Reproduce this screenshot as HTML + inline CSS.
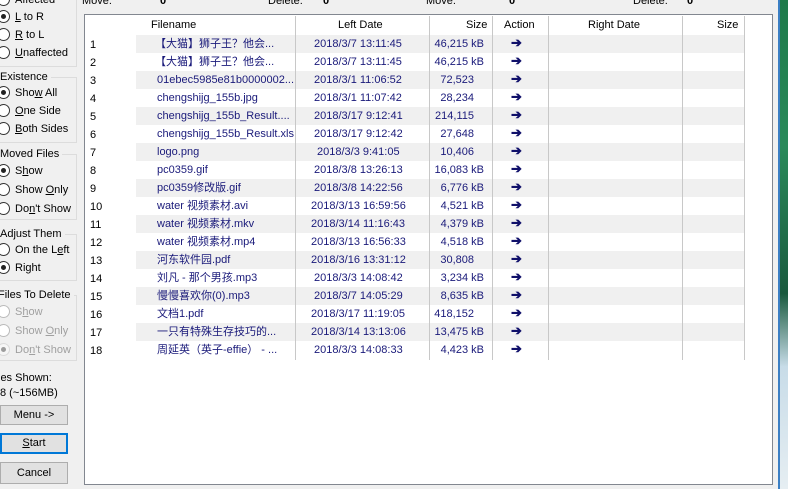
<!DOCTYPE html>
<html><head><meta charset="utf-8"><style>
*{margin:0;padding:0;box-sizing:border-box}
body{width:788px;height:489px;overflow:hidden;background:#f0f0f0;font-family:"Liberation Sans","Noto Sans CJK SC",sans-serif;font-size:11px;color:#000;position:relative}
.a{position:absolute;white-space:nowrap}
.rb{position:absolute;left:-3px;width:13px;height:13px;border:1px solid #333;border-radius:50%;background:#fff}
.rb.on::after{content:"";position:absolute;left:3px;top:3px;width:5px;height:5px;border-radius:50%;background:#222}
.rb.dis{border-color:#bbb}
.lb{position:absolute;left:15px;font-size:11px;line-height:14px}
.dis2{color:#a0a0a0}
.grp{position:absolute;left:-5px;width:82px;border:1px solid #dcdcdc;border-left:none}
.gt{position:absolute;left:0;background:#f0f0f0;padding-right:3px;line-height:14px}
.btn{position:absolute;left:0;width:68px;border:1px solid #adadad;background:#e1e1e1;text-align:center;font-size:11px}
#box{position:absolute;left:84px;top:14px;width:689px;height:471px;background:#fff;border:1px solid #828790}
.row{position:absolute;left:51px;width:609px;height:18px}
.c{position:absolute;top:2px;color:#1a1a7a;white-space:nowrap;font-size:11px;line-height:14px}
.n{position:absolute;left:5px;color:#000;font-size:11px;line-height:14px}
.vl{position:absolute;top:0;width:1px;height:344px;background:#c8c8c8}
.h{position:absolute;top:4px;font-size:11px;color:#000}
.ar{left:375px;top:1px;font-weight:bold;font-size:13px;color:#10106a}
</style></head><body>
<div class="a" style="left:82px;top:-5px">Move:</div>
<div class="a" style="left:160px;top:-5px;font-weight:bold">0</div>
<div class="a" style="left:268px;top:-5px">Delete:</div>
<div class="a" style="left:323px;top:-5px;font-weight:bold">0</div>
<div class="a" style="left:426px;top:-5px">Move:</div>
<div class="a" style="left:509px;top:-5px;font-weight:bold">0</div>
<div class="a" style="left:633px;top:-5px">Delete:</div>
<div class="a" style="left:687px;top:-5px;font-weight:bold">0</div>

<div class="grp" style="top:-10px;height:77px"></div>
<div class="rb" style="top:-7px"></div><div class="lb" style="top:-7px">Affected</div>
<div class="rb on" style="top:10px"></div><div class="lb" style="top:10px"><u>L</u> to R</div>
<div class="rb" style="top:28px"></div><div class="lb" style="top:28px"><u>R</u> to L</div>
<div class="rb" style="top:46px"></div><div class="lb" style="top:46px"><u>U</u>naffected</div>

<div class="grp" style="top:77px;height:66px"></div>
<div class="gt" style="top:70px">Existence</div>
<div class="rb on" style="top:86px"></div><div class="lb" style="top:86px">Sho<u>w</u> All</div>
<div class="rb" style="top:104px"></div><div class="lb" style="top:104px"><u>O</u>ne Side</div>
<div class="rb" style="top:122px"></div><div class="lb" style="top:122px"><u>B</u>oth Sides</div>

<div class="grp" style="top:154px;height:66px"></div>
<div class="gt" style="top:147px">Moved Files</div>
<div class="rb on" style="top:164px"></div><div class="lb" style="top:164px">S<u>h</u>ow</div>
<div class="rb" style="top:183px"></div><div class="lb" style="top:183px">Show <u>O</u>nly</div>
<div class="rb" style="top:202px"></div><div class="lb" style="top:202px">Do<u>n</u>'t Show</div>

<div class="grp" style="top:234px;height:47px"></div>
<div class="gt" style="top:227px">Adjust Them</div>
<div class="rb" style="top:243px"></div><div class="lb" style="top:243px">On the L<u>e</u>ft</div>
<div class="rb on" style="top:261px"></div><div class="lb" style="top:261px">Ri<u>g</u>ht</div>

<div class="grp" style="top:295px;height:66px"></div>
<div class="gt" style="top:288px;left:-2px">Files To Delete</div>
<div class="rb dis" style="top:305px"></div><div class="lb dis2" style="top:305px">S<u>h</u>ow</div>
<div class="rb dis" style="top:324px"></div><div class="lb dis2" style="top:324px">Show <u>O</u>nly</div>
<div class="rb dis on" style="top:343px;opacity:.4"></div><div class="lb dis2" style="top:343px">Do<u>n</u>'t Show</div>

<div class="a" style="left:-2px;top:372px">les Shown:</div>
<div class="a" style="left:0;top:387px">8 (~156MB)</div>
<div class="btn" style="top:405px;height:20px;line-height:18px">Menu -&gt;</div>
<div class="btn" style="top:433px;height:21px;line-height:17px;border:2px solid #0078d7"><u>S</u>tart</div>
<div class="btn" style="top:462px;height:22px;line-height:20px">Cancel</div>

<div class="a" style="left:778px;top:0;width:2px;height:489px;background:#3b7fc4"></div>
<div class="a" style="left:780px;top:0;width:8px;height:489px;background:linear-gradient(#1e7a4a,#2a8a5a 30%,#1a5a3e 60%,#c8dce8 75%,#e6eef2)"></div>

<div id="box">
<div class="h" style="left:66px">Filename</div>
<div class="h" style="left:253px">Left Date</div>
<div class="h" style="left:381px">Size</div>
<div class="h" style="left:419px">Action</div>
<div class="h" style="left:503px">Right Date</div>
<div class="h" style="left:632px">Size</div>
</div>

<div id="rows" style="position:absolute;left:85px;top:35px;width:687px">
<div class="n" style="top:3px">1</div><div class="row" style="top:0;background:#f0f0f0"><span class="c" style="left:19px">【大猫】狮子王？他会...</span><span class="c" style="left:178px">2018/3/7 13:11:45</span><span class="c" style="right:261px">46,215 kB</span><span class="c ar">➔</span></div>
<div class="n" style="top:21px">2</div><div class="row" style="top:18px"><span class="c" style="left:19px">【大猫】狮子王？他会...</span><span class="c" style="left:178px">2018/3/7 13:11:45</span><span class="c" style="right:261px">46,215 kB</span><span class="c ar">➔</span></div>
<div class="n" style="top:39px">3</div><div class="row" style="top:36px;background:#f0f0f0"><span class="c" style="left:21px">01ebec5985e81b0000002...</span><span class="c" style="left:178px">2018/3/1 11:06:52</span><span class="c" style="right:271px">72,523</span><span class="c ar">➔</span></div>
<div class="n" style="top:57px">4</div><div class="row" style="top:54px"><span class="c" style="left:21px">chengshijg_155b.jpg</span><span class="c" style="left:178px">2018/3/1 11:07:42</span><span class="c" style="right:271px">28,234</span><span class="c ar">➔</span></div>
<div class="n" style="top:75px">5</div><div class="row" style="top:72px;background:#f0f0f0"><span class="c" style="left:21px">chengshijg_155b_Result....</span><span class="c" style="left:178px">2018/3/17 9:12:41</span><span class="c" style="right:271px">214,115</span><span class="c ar">➔</span></div>
<div class="n" style="top:93px">6</div><div class="row" style="top:90px"><span class="c" style="left:21px">chengshijg_155b_Result.xls</span><span class="c" style="left:178px">2018/3/17 9:12:42</span><span class="c" style="right:271px">27,648</span><span class="c ar">➔</span></div>
<div class="n" style="top:111px">7</div><div class="row" style="top:108px;background:#f0f0f0"><span class="c" style="left:21px">logo.png</span><span class="c" style="left:181px">2018/3/3 9:41:05</span><span class="c" style="right:271px">10,406</span><span class="c ar">➔</span></div>
<div class="n" style="top:129px">8</div><div class="row" style="top:126px"><span class="c" style="left:21px">pc0359.gif</span><span class="c" style="left:178px">2018/3/8 13:26:13</span><span class="c" style="right:261px">16,083 kB</span><span class="c ar">➔</span></div>
<div class="n" style="top:147px">9</div><div class="row" style="top:144px;background:#f0f0f0"><span class="c" style="left:21px">pc0359修改版.gif</span><span class="c" style="left:178px">2018/3/8 14:22:56</span><span class="c" style="right:261px">6,776 kB</span><span class="c ar">➔</span></div>
<div class="n" style="top:165px">10</div><div class="row" style="top:162px"><span class="c" style="left:21px">water 视频素材.avi</span><span class="c" style="left:175px">2018/3/13 16:59:56</span><span class="c" style="right:261px">4,521 kB</span><span class="c ar">➔</span></div>
<div class="n" style="top:183px">11</div><div class="row" style="top:180px;background:#f0f0f0"><span class="c" style="left:21px">water 视频素材.mkv</span><span class="c" style="left:175px">2018/3/14 11:16:43</span><span class="c" style="right:261px">4,379 kB</span><span class="c ar">➔</span></div>
<div class="n" style="top:201px">12</div><div class="row" style="top:198px"><span class="c" style="left:21px">water 视频素材.mp4</span><span class="c" style="left:175px">2018/3/13 16:56:33</span><span class="c" style="right:261px">4,518 kB</span><span class="c ar">➔</span></div>
<div class="n" style="top:219px">13</div><div class="row" style="top:216px;background:#f0f0f0"><span class="c" style="left:21px">河东软件园.pdf</span><span class="c" style="left:175px">2018/3/16 13:31:12</span><span class="c" style="right:271px">30,808</span><span class="c ar">➔</span></div>
<div class="n" style="top:237px">14</div><div class="row" style="top:234px"><span class="c" style="left:21px">刘凡 - 那个男孩.mp3</span><span class="c" style="left:178px">2018/3/3 14:08:42</span><span class="c" style="right:261px">3,234 kB</span><span class="c ar">➔</span></div>
<div class="n" style="top:255px">15</div><div class="row" style="top:252px;background:#f0f0f0"><span class="c" style="left:21px">慢慢喜欢你(0).mp3</span><span class="c" style="left:178px">2018/3/7 14:05:29</span><span class="c" style="right:261px">8,635 kB</span><span class="c ar">➔</span></div>
<div class="n" style="top:273px">16</div><div class="row" style="top:270px"><span class="c" style="left:21px">文档1.pdf</span><span class="c" style="left:175px">2018/3/17 11:19:05</span><span class="c" style="right:271px">418,152</span><span class="c ar">➔</span></div>
<div class="n" style="top:291px">17</div><div class="row" style="top:288px;background:#f0f0f0"><span class="c" style="left:21px">一只有特殊生存技巧的...</span><span class="c" style="left:175px">2018/3/14 13:13:06</span><span class="c" style="right:261px">13,475 kB</span><span class="c ar">➔</span></div>
<div class="n" style="top:309px">18</div><div class="row" style="top:306px"><span class="c" style="left:21px">周延英（英子-effie） - ...</span><span class="c" style="left:178px">2018/3/3 14:08:33</span><span class="c" style="right:261px">4,423 kB</span><span class="c ar">➔</span></div>
</div>

<div style="position:absolute;left:84px;top:16px;width:689px">
<div class="vl" style="left:211px"></div><div class="vl" style="left:345px"></div><div class="vl" style="left:408px"></div><div class="vl" style="left:464px"></div><div class="vl" style="left:598px"></div><div class="vl" style="left:660px"></div>
</div>
</body></html>
